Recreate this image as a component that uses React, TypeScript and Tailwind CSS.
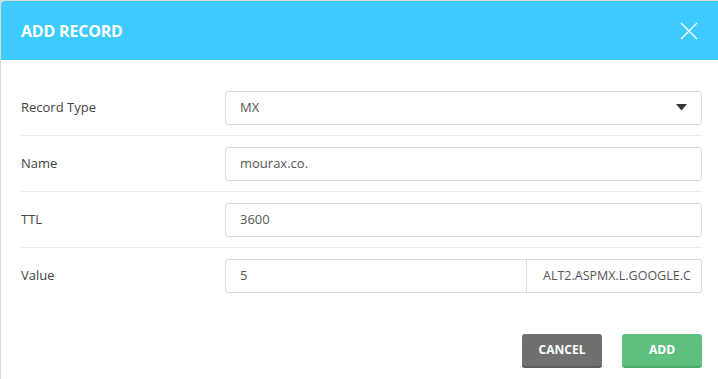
import React from "react";

const font = { fontFamily: '"Open Sans", "Noto Sans", sans-serif' };

function Row({ label, children, last }: { label: string; children: React.ReactNode; last?: boolean }) {
  return (
    <div className={`flex items-center h-14 ${last ? "" : "border-b border-[#ebebeb]"}`}>
      <div className="w-[204px] text-[13px] text-[#444]">{label}</div>
      <div className="flex-1">{children}</div>
    </div>
  );
}

function Input({ value, className = "" }: { value: string; className?: string }) {
  return (
    <div className={`h-[34px] flex items-center px-[14px] border border-[#dcdcdc] rounded-[3px] bg-white text-[13px] text-[#555] ${className}`}>
      {value}
    </div>
  );
}

export default function App() {
  return (
    <div className="w-[718px] h-[379px] bg-[#d9d9d9] pt-px pl-px overflow-hidden" style={font}>
      <div className="w-[717px] h-[378px] bg-white rounded-tl-[4px] overflow-hidden flex flex-col">
        <div className="h-[59px] shrink-0 bg-[#3dcaff] flex items-center justify-between pl-[20px] pr-[20px]">
          <div className="text-white font-bold text-[16px] tracking-[-0.2px]">ADD RECORD</div>
          <svg width="18" height="18" viewBox="0 0 18 18">
            <path d="M1 1 L17 17 M17 1 L1 17" stroke="white" strokeWidth="1.3" fill="none" />
          </svg>
        </div>
        <div className="pl-[20px] pr-[16px] pt-[20px]">
          <Row label="Record Type">
            <div className="h-[34px] flex items-center justify-between pl-[14px] pr-[14px] border border-[#dcdcdc] rounded-[3px] text-[13px] text-[#555]">
              <span>MX</span>
              <svg width="11" height="7" viewBox="0 0 11 7">
                <path d="M0 0 H11 L5.5 6.5 Z" fill="#333" />
              </svg>
            </div>
          </Row>
          <Row label="Name">
            <Input value="mourax.co." />
          </Row>
          <Row label="TTL">
            <Input value="3600" />
          </Row>
          <Row label="Value" last>
            <div className="flex h-[34px]">
              <div className="w-[302px] h-full flex items-center px-[14px] border border-[#dcdcdc] rounded-l-[3px] text-[13px] text-[#555]">5</div>
              <div className="flex-1 h-full flex items-center pl-[16px] border border-l-0 border-[#dcdcdc] rounded-r-[3px] text-[12.5px] text-[#555] overflow-hidden whitespace-nowrap">
                ALT2.ASPMX.L.GOOGLE.C
              </div>
            </div>
          </Row>
          <div className="flex justify-end gap-5 mt-[30px]">
            <button className="w-20 h-[34px] rounded-[3px] bg-[#707070] border-b-2 border-[#5c5c5c] text-white text-[12px] font-bold">CANCEL</button>
            <button className="w-20 h-[34px] rounded-[3px] bg-[#5fbf80] border-b-2 border-[#4caa6b] text-white text-[12px] font-bold">ADD</button>
          </div>
        </div>
      </div>
    </div>
  );
}
